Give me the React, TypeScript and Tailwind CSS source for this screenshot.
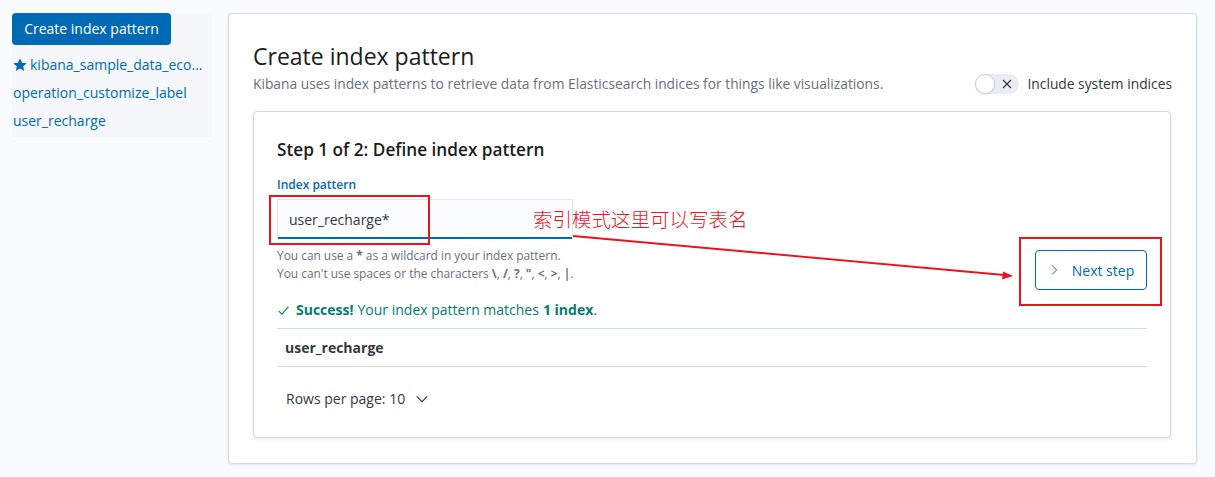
import React from "react";

const font = { fontFamily: '"Open Sans", "Noto Sans", sans-serif' };

function Star() {
  return (
    <svg width="14" height="14" viewBox="0 0 16 16" className="mr-[3px] shrink-0">
      <path d="M8 0.5l2.3 5 5.4.5-4.1 3.6 1.2 5.3L8 12.1l-4.8 2.8 1.2-5.3L0.3 6l5.4-.5z" fill="#006bb4" />
    </svg>
  );
}

export default function App() {
  return (
    <div className="relative w-[1215px] h-[477px] bg-[#fafbfd] overflow-hidden" style={font}>
      <div className="flex items-start pt-[13px] pl-[12px]">
        {/* Sidebar */}
        <div className="w-[200px] h-[124px] bg-[#f5f7fa] flex flex-col">
          <button className="w-[159px] h-[32px] bg-[#006bb4] rounded-[4px] text-white text-[14px] leading-[20px] flex items-center justify-center">
            Create index pattern
          </button>
          <div className="flex flex-col mt-[6px] text-[14px] leading-[28px] text-[#006bb4]">
            <div className="flex items-center pl-[1px]">
              <Star />
              <span>kibana_sample_data_eco...</span>
            </div>
            <div className="pl-[1px]">operation_customize_label</div>
            <div className="pl-[1px]">user_recharge</div>
          </div>
        </div>

        {/* Main panel */}
        <div className="ml-[16px] w-[969px] h-[451px] bg-white border border-[#d3dae6] rounded-[4px] shadow-[0_1px_3px_rgba(152,162,179,0.25)] px-[24px] pt-[24px]">
          <div className="text-[23px] leading-[36px] text-[#1a1c21]">Create index pattern</div>
          <div className="flex items-center justify-between h-[20px]">
            <div className="text-[13.8px] leading-[20px] text-[#69707d]">
              Kibana uses index patterns to retrieve data from Elasticsearch indices for things like visualizations.
            </div>
            <div className="flex items-center">
              <div className="relative w-[44px] h-[20px] rounded-full bg-[#e9edf3]">
                <div className="absolute left-0 top-0 w-[20px] h-[20px] rounded-full bg-white border border-[#c9d0dc] shadow-[0_1px_2px_rgba(0,0,0,0.1)]" />
                <svg className="absolute left-[26px] top-[4px]" width="12" height="12" viewBox="0 0 12 12">
                  <path d="M2 2l8 8M10 2l-8 8" stroke="#343741" strokeWidth="1.2" />
                </svg>
              </div>
              <span className="ml-[8px] text-[13.8px] leading-[20px] text-[#343741]">Include system indices</span>
            </div>
          </div>

          {/* Inner panel */}
          <div className="mt-[17px] w-[918px] h-[327px] border border-[#d3dae6] rounded-[4px] shadow-[0_1px_3px_rgba(152,162,179,0.25)] px-[23px] pt-[24px]">
            <div className="text-[17.2px] leading-[28px] font-[550] text-[#1a1c21]">Step 1 of 2: Define index pattern</div>
            <div className="flex justify-between">
              <div className="flex flex-col mt-[12px]">
                <div className="text-[12px] leading-[18px] font-semibold text-[#006bb4]">Index pattern</div>
                <div className="mt-[5px] w-[296px] h-[40px] bg-[#fbfcfd] border border-[#e2e6ec] border-b-0 shadow-[inset_0_-2px_0_#006bb4] flex items-center px-[11px] text-[14px] text-[#343741]">
                  user_recharge*
                </div>
                <div className="mt-[7px] text-[11.9px] leading-[18px] text-[#69707d]">
                  <div>
                    You can use a <b className="font-bold">*</b> as a wildcard in your index pattern.
                  </div>
                  <div>
                    You can't use spaces or the characters <b className="font-bold">\</b>, <b className="font-bold">/</b>,{" "}
                    <b className="font-bold">?</b>, <b className="font-bold">"</b>, <b className="font-bold">&lt;</b>,{" "}
                    <b className="font-bold">&gt;</b>, <b className="font-bold">|</b>.
                  </div>
                </div>
              </div>
              <button className="mt-[86px] w-[112px] h-[40px] border border-[#006bb4] rounded-[4px] flex items-center justify-center text-[14px] text-[#006bb4]">
                <svg width="12" height="12" viewBox="0 0 16 16" className="mr-[12px]">
                  <path d="M5.5 2l6 6-6 6" stroke="#006bb4" strokeWidth="1.3" fill="none" />
                </svg>
                Next step
              </button>
            </div>

            <div className="mt-[10px] flex items-center text-[14px] leading-[20px] text-[#017d73]">
              <svg width="13" height="13" viewBox="0 0 16 16" className="mr-[6px]">
                <path d="M2 8.5l4 4 8-9" stroke="#017d73" strokeWidth="1.3" fill="none" />
              </svg>
              <b className="font-bold">Success!</b>
              <span className="ml-[4px]">Your index pattern matches</span>
              <b className="font-bold ml-[4px]">1 index</b>
              <span>.</span>
            </div>

            <div className="mt-[8px] border-t border-b border-[#d3dae6] h-[39px] flex items-center px-[8px] text-[14px] font-bold text-[#343741]">
              user_recharge
            </div>

            <div className="mt-[22px] flex items-center pl-[9px] text-[14px] leading-[20px] text-[#343741]">
              Rows per page: 10
              <svg width="14" height="14" viewBox="0 0 16 16" className="ml-[10px]">
                <path d="M2 5l6 6 6-6" stroke="#343741" strokeWidth="1.3" fill="none" />
              </svg>
            </div>
          </div>
        </div>
      </div>

      {/* Annotation overlay */}
      <div className="absolute left-[269px] top-[195px] w-[161px] h-[50px] border-2 border-[#e8141e]" />
      <div className="absolute left-[1019px] top-[237px] w-[143px] h-[69px] border-2 border-[#e8141e]" />
      <div
        className="absolute left-[533px] top-[205px] text-[19.5px] leading-[28px] text-[#f0141e]"
        style={{ fontFamily: '"Noto Sans CJK SC", sans-serif', fontWeight: 300 }}
      >
        索引模式这里可以写表名
      </div>
      <svg className="absolute left-0 top-0" width="1215" height="477" viewBox="0 0 1215 477">
        <line x1="573" y1="236" x2="1004" y2="275" stroke="#e8141e" strokeWidth="2" />
        <path d="M1013 276 L1002 279.5 L1003 271.5 Z" fill="#e8141e" />
      </svg>
    </div>
  );
}
